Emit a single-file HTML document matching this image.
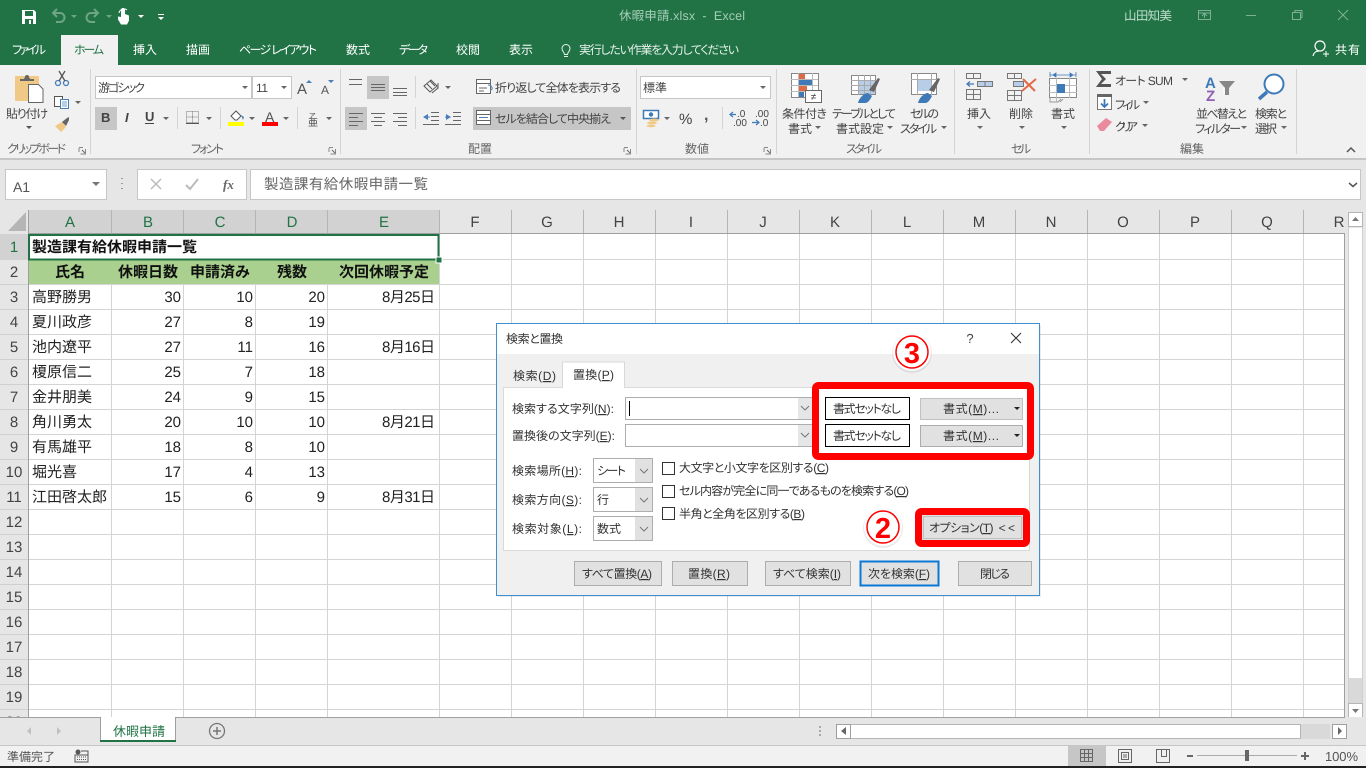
<!DOCTYPE html>
<html lang="ja"><head><meta charset="utf-8"><title>休暇申請.xlsx - Excel</title>
<style>
html,body{margin:0;padding:0;width:1366px;height:768px;overflow:hidden;background:#e6e6e6}
svg{display:block;font-family:"Liberation Sans","Noto Sans CJK JP",sans-serif;font-feature-settings:"palt";text-rendering:geometricPrecision}
.r{font-size:12px;fill:#444}
.g{font-size:12px;fill:#666}
.w{font-size:12px;fill:#fff}
.c{font-size:15px;fill:#222;font-feature-settings:normal}
.b{font-size:15px;fill:#111;font-weight:bold;font-feature-settings:normal}
.h{font-size:15px;fill:#444}
.hs{font-size:15px;fill:#217346}
.d{font-size:12px;fill:#333}
.n{text-anchor:end}
.m{text-anchor:middle}
.u{text-decoration:underline}
</style></head><body>
<svg width="1366" height="768" viewBox="0 0 1366 768" xmlns="http://www.w3.org/2000/svg">
<!-- chrome -->
<rect width="1366" height="65" fill="#217346"/>
<rect y="65" width="1366" height="93" fill="#f1f1f1"/>
<rect y="158" width="1366" height="2" fill="#c6c6c6"/>
<rect y="160" width="1366" height="50" fill="#e6e6e6"/>
<rect x="61" y="35" width="57" height="30" fill="#f1f1f1"/>
<!-- QAT -->
<path d="M22 10h12l2 2v12H22z" fill="#fff"/><rect x="25" y="11" width="8" height="5" fill="#217346"/><rect x="25" y="19" width="8" height="5" fill="#217346"/><rect x="29" y="20" width="2" height="4" fill="#fff"/>
<g fill="none" stroke="#6ea586" stroke-width="2"><path d="M53 13h7a4.500 4.500 0 0 1 0 9h-4M57 9l-4 4 4 4"/><path d="M98 13h-7a4.500 4.500 0 0 0 0 9h4M94 9l4 4-4 4"/></g>
<path d="M71 15h6l-3 3zM106 15h6l-3 3z" fill="#6ea586"/>
<path d="M121 17v-7a2 2 0 0 1 4 0v4l4 1.500v5l-2 4h-6l-3-5v-3z" fill="#fff"/><path d="M119 13a5 5 0 0 1 8-3" stroke="#fff" fill="none"/>
<path d="M138 15h6l-3 3zM158 17h6l-3 3z" fill="#fff"/><rect x="158" y="14" width="6" height="1" fill="#fff"/>
<!-- title -->
<text x="619" y="20" font-size="12.500" fill="#a6cdb6" textLength="126">休暇申請.xlsx&#160;&#160;-&#160;&#160;Excel</text>
<text x="1124" y="20" font-size="12.500" fill="#bcdcc9" textLength="48">山田知美</text>
<g fill="none" stroke="#7fb096"><rect x="1198.500" y="10.500" width="12" height="9"/><path d="M1198 13h13M1204.500 18v-4M1202 16l2.500-2.500 2.500 2.500"/><path d="M1246 15.500h10"/><rect x="1292.500" y="12.500" width="8" height="7"/><path d="M1295 12.500v-2h7v7h-1.500"/><path d="M1338 10l10 10M1348 10l-10 10"/></g>
<!-- tabs -->
<text x="12" y="54" class="w" textLength="34">ファイル</text>
<text x="74" y="54" font-size="12" fill="#217346" textLength="30">ホーム</text>
<text x="133" y="54" class="w" textLength="24">挿入</text>
<text x="186" y="54" class="w" textLength="24">描画</text>
<text x="239" y="54" class="w" textLength="78">ページ&#160;レイアウト</text>
<text x="346" y="54" class="w" textLength="24">数式</text>
<text x="399" y="54" class="w" textLength="29">データ</text>
<text x="456" y="54" class="w" textLength="24">校閲</text>
<text x="509" y="54" class="w" textLength="24">表示</text>
<path d="M564 56.500h4M564.500 54.500c0-2.500-2.500-3-2.500-6a4 4 0 0 1 8 0c0 3-2.500 3.500-2.500 6z" fill="none" stroke="#e4f0e9"/>
<text x="579" y="54" font-size="12" fill="#e4f0e9" textLength="160">実行したい作業を入力してください</text>
<circle cx="1320" cy="46" r="5" fill="none" stroke="#fff" stroke-width="1.200"/><path d="M1313 56c1-4 3-5 6-5" fill="none" stroke="#fff" stroke-width="1.200"/><path d="M1323 54h6M1326 51v6" stroke="#fff"/>
<text x="1335" y="54" class="w" textLength="25">共有</text>
<!-- ribbon separators -->
<path d="M90.500 69v85M340.500 69v85M636.500 69v85M776.500 69v85M954.500 69v85M1089.500 69v85M1296.500 69v85" stroke="#d4d4d4"/>
<path d="M177.500 107v22M220.500 107v22M297.500 107v22M415.500 76v22M415.500 107v22M722.500 107v22" stroke="#d4d4d4"/>
<!-- clipboard -->
<rect x="15" y="76" width="24" height="25" rx="1" fill="#f0c987"/><path d="M20 79h4l1-2a2 2 0 0 1 4 0l1 2h4v2H20z" fill="#666"/>
<path d="M28.500 84.500h10l4.500 4.500v13.500H28.500z" fill="#fff" stroke="#666"/>
<text x="6" y="118" class="r" textLength="42">貼り付け</text><path d="M26 126h6l-3 3z" fill="#555"/>
<g fill="none" stroke="#4a7eb8" stroke-width="1.300"><circle cx="58" cy="83" r="2.500"/><circle cx="66" cy="83" r="2.500"/></g><path d="M59 81l6-10M65 81l-6-10" stroke="#555" stroke-width="1.300"/>
<rect x="54.500" y="96.500" width="8" height="10" fill="#fff" stroke="#555"/><rect x="60.500" y="99.500" width="8" height="9" fill="#fff" stroke="#4a7eb8"/><path d="M62 102h5M62 104h5M62 106h5" stroke="#4a7eb8" stroke-width=".8"/>
<path d="M75 101h6l-3 3z" fill="#666"/>
<path d="M55 126l7-4 4 5-5 5z" fill="#f0c987"/><path d="M62 122l5-4 2-1 0 3-3 6z" fill="#666"/>
<text x="7" y="153" class="g" textLength="59">クリップボード</text>
<path d="M79 147.500h4M79 148v4M85.500 149v5h-5" fill="none" stroke="#888"/><path d="M82 150l3 3" stroke="#666"/>
<!-- font -->
<rect x="95.500" y="76.500" width="156" height="22" fill="#fff" stroke="#c6c6c6"/><rect x="252.500" y="76.500" width="39" height="22" fill="#fff" stroke="#c6c6c6"/>
<text x="98" y="92" class="r" textLength="47">游ゴシック</text><text x="256" y="92" class="r" textLength="12">11</text>
<path d="M242 86h6l-3 3zM281 86h6l-3 3z" fill="#666"/>
<text x="297" y="94" font-size="15" fill="#555">A</text><path d="M306 83l3-3 3 3z" fill="#4a7eb8"/>
<text x="321" y="94" font-size="12" fill="#555">A</text><path d="M328 80h6l-3 3z" fill="#4a7eb8"/>
<rect x="95" y="107" width="22" height="23" fill="#c6c6c6"/>
<text x="101" y="122" font-size="13" font-weight="bold" fill="#444">B</text>
<text x="125" y="122" font-size="13" font-weight="bold" font-style="italic" fill="#444">I</text>
<text x="145" y="121" font-size="13" font-weight="bold" fill="#444">U</text><rect x="145" y="123" width="9" height="1" fill="#444"/>
<path d="M163 117h6l-3 3zM206 117h6l-3 3zM249 117h6l-3 3zM283 117h6l-3 3zM326 117h6l-3 3z" fill="#666"/>
<path d="M186.500 111.500h12v11h-12zM192.500 111.500v11M186.500 117h12" fill="none" stroke="#777" stroke-dasharray="1 1"/><path d="M186 123.500h13" stroke="#555"/>
<path d="M231 116l5-5 5 5-4 4h-2z" fill="#fff" stroke="#555"/><path d="M241 115l3 2-1 3z" fill="#4a7eb8"/><rect x="228" y="122" width="16" height="4" fill="#ff0"/>
<text x="265" y="122" font-size="14" fill="#555">A</text><rect x="262" y="122" width="16" height="4" fill="#f00"/>
<text x="309" y="118" font-size="7" fill="#444">ア</text><text x="308" y="126" font-size="10" fill="#444">亜</text>
<text x="191" y="153" class="g" textLength="33">フォント</text>
<path d="M329 147.500h4M329 148v4M335.500 149v5h-5" fill="none" stroke="#888"/><path d="M332 150l3 3" stroke="#666"/>
<!-- align -->
<rect x="367" y="76" width="22" height="23" fill="#c6c6c6"/>
<path d="M349 79.500h13M349 84.500h13M371 84.500h14M371 87.500h14M371 90.500h14M393 88.500h14M393 92.500h14M393 95.500h14" stroke="#666"/>
<g fill="none" stroke="#555"><path d="M424 86l7-6 6 6-7 6z" fill="#f1f1f1"/><path d="M427 84l5 5M430 81l5 5"/><path d="M432 93l6-5M438 83v5h-1"/></g>
<path d="M445 86h6l-3 3z" fill="#666"/>
<rect x="345" y="107" width="22" height="23" fill="#c6c6c6"/>
<path d="M349 113.500h14M349 117.500h9M349 121.500h14M349 125.500h9M371 113.500h14M374 117.500h8M371 121.500h14M374 125.500h8M393 113.500h14M398 117.500h9M393 121.500h14M398 125.500h9" stroke="#666"/>
<path d="M431 112.500h8M431 116.500h8M431 120.500h8M423 124.500h16M453 112.500h8M453 116.500h8M453 120.500h8M445 124.500h16" stroke="#666"/>
<path d="M423 117l5-3v6zM451 117l-5-3v6z" fill="#4a7eb8"/><path d="M425 117h5M445 117h5" stroke="#4a7eb8"/>
<rect x="476.500" y="79.500" width="14" height="14" fill="#fff" stroke="#666"/><path d="M476 83.500h15M479 88h8M479 91h5" stroke="#666"/><path d="M490 90c4 0 2-5-2-5" stroke="#4a7eb8" fill="none"/>
<text x="495" y="92" class="r" textLength="126">折り返して全体を表示する</text>
<rect x="473" y="107" width="158" height="23" fill="#c6c6c6"/>
<rect x="476.500" y="110.500" width="14" height="14" fill="#fff" stroke="#666"/><path d="M476 114.500h15M476 120.500h15" stroke="#666"/><path d="M479 117.500h9" stroke="#4a7eb8"/>
<text x="495" y="123" class="r" textLength="116">セルを結合して中央揃え</text><path d="M620 117h6l-3 3z" fill="#555"/>
<text x="468" y="153" class="g" textLength="24">配置</text>
<path d="M624 147.500h4M624 148v4M630.500 149v5h-5" fill="none" stroke="#888"/><path d="M627 150l3 3" stroke="#666"/>
<!-- number -->
<rect x="640.500" y="76.500" width="130" height="22" fill="#fff" stroke="#c6c6c6"/>
<text x="643" y="92" class="r" textLength="24">標準</text><path d="M760 86h6l-3 3z" fill="#666"/>
<rect x="643.500" y="110.500" width="15" height="8" fill="#fff" stroke="#3f7ab8" stroke-width="1.500"/><circle cx="651" cy="114.500" r="2.200" fill="#3f7ab8"/>
<ellipse cx="654" cy="120" rx="5" ry="1.500" fill="#f0c987"/><ellipse cx="652" cy="123" rx="5" ry="1.500" fill="#f0c987"/><ellipse cx="651" cy="126" rx="4.500" ry="1.300" fill="#f0c987"/>
<path d="M664 117h6l-3 3z" fill="#666"/>
<text x="679" y="124" font-size="15" fill="#444">%</text>
<text x="704" y="120" font-size="16" font-weight="bold" fill="#555">,</text>
<text x="737" y="117" font-size="10" fill="#444">.0</text><text x="733" y="126" font-size="10" fill="#444">.00</text>
<text x="755" y="117" font-size="10" fill="#444">.00</text><text x="760" y="126" font-size="10" fill="#444">.0</text>
<path d="M730 114.500h6M733 112l-3 2.500 3 2.500M752 122.500h7M756 120l3 2.500-3 2.500" stroke="#3f7ab8" fill="none" stroke-width="1.200"/>
<text x="685" y="153" class="g" textLength="24">数値</text>
<path d="M764 147.500h4M764 148v4M770.500 149v5h-5" fill="none" stroke="#888"/><path d="M767 150l3 3" stroke="#666"/>
<!-- cond format -->
<rect x="791.500" y="73.500" width="27" height="24" fill="#fff" stroke="#888"/><path d="M791 79.500h27M791 85.500h27M791 91.500h27M798.500 73v24M812.500 73v24" stroke="#bbb"/>
<rect x="799" y="74" width="6" height="5" fill="#e06a45"/><rect x="799" y="80" width="13" height="5" fill="#3f7ab8"/><rect x="799" y="86" width="8" height="5" fill="#e06a45"/><rect x="799" y="92" width="5" height="5" fill="#3f7ab8"/>
<rect x="805.500" y="90.500" width="16" height="12" fill="#fff" stroke="#666"/><text x="813.500" y="100" font-size="10" fill="#444" class="m">≠</text>
<text x="782" y="118" class="r" textLength="45">条件付き</text><text x="788" y="133" class="r" textLength="24">書式</text><path d="M815 126h6l-3 3z" fill="#666"/>
<rect x="851.500" y="75.500" width="24" height="19" fill="#fff" stroke="#888"/><rect x="858" y="80" width="17" height="14" fill="#b7cde8"/><path d="M851 80.500h25M851 85.500h25M851 90.500h25M858.500 75v20M864.500 75v20M870.500 75v20" stroke="#aaa"/>
<path d="M869 90l9-12 2 1-6 13z" fill="#666"/><path d="M858 103c1-5 6-10 10-10l4 3c-2 4-4 7-7 7z" fill="#3f7ab8"/>
<text x="832" y="118" class="r" textLength="64">テーブルとして</text><text x="836" y="133" class="r" textLength="48">書式設定</text><path d="M887 126h6l-3 3z" fill="#666"/>
<rect x="911.500" y="73.500" width="25" height="21" fill="#fff" stroke="#888"/><path d="M911 79.500h26M917.500 73v22M931.500 73v22" stroke="#aaa"/><rect x="918" y="80" width="13" height="11" fill="#b7cde8"/>
<path d="M929 90l9-12 2 1-6 13z" fill="#666"/><path d="M918 103c1-5 6-10 10-10l4 3c-2 4-4 7-7 7z" fill="#3f7ab8"/>
<text x="910" y="118" class="r" textLength="29">セルの</text><text x="900" y="133" class="r" textLength="37">スタイル</text><path d="M941 126h6l-3 3z" fill="#666"/>
<text x="846" y="153" class="g" textLength="36">スタイル</text>
<!-- cells -->
<g fill="none" stroke="#777"><rect x="966.500" y="73.500" width="14" height="5"/><path d="M973.500 73v6"/><rect x="977.500" y="81.500" width="15" height="5" fill="#b7cde8"/><path d="M985 81v6"/><rect x="966.500" y="89.500" width="14" height="10"/><path d="M966 94.500h15M973.500 89v11"/>
<rect x="1007.500" y="73.500" width="14" height="5"/><path d="M1014.500 73v6"/><rect x="1013.500" y="81.500" width="10" height="5" fill="#b7cde8"/><rect x="1007.500" y="90.500" width="14" height="10"/><path d="M1007 95.500h15M1014.500 90v11"/></g>
<path d="M967 84h7M970 81.500l-3 2.500 3 2.500" stroke="#3f7ab8" fill="none" stroke-width="1.300"/>
<path d="M1023 79l12 12M1036 79l-14 12" stroke="#e06a45" stroke-width="2"/>
<text x="967" y="118" class="r" textLength="24">挿入</text><path d="M977 126h6l-3 3z" fill="#666"/>
<text x="1009" y="118" class="r" textLength="24">削除</text><path d="M1019 126h6l-3 3z" fill="#666"/>
<text x="1051" y="118" class="r" textLength="24">書式</text><path d="M1061 126h6l-3 3z" fill="#666"/>
<path d="M1050 75h26M1050 72v5M1076 72v5M1053 75l3-2v4zM1073 75l-3-2v4z" stroke="#3f7ab8" fill="#3f7ab8" stroke-width=".8"/>
<rect x="1049.500" y="78.500" width="27" height="19" fill="#fff" stroke="#888"/><path d="M1049 85.500h28M1049 92.500h28M1056.500 78v24M1069.500 78v20" stroke="#bbb"/><rect x="1057" y="84" width="8" height="9" fill="#3f7ab8"/><path d="M1050 98v4h8l3-3M1060 102l3-3" fill="none" stroke="#999"/>
<text x="1011" y="153" class="g" textLength="20">セル</text>
<!-- editing -->
<path d="M1096 71h15v3h-10l5 5-5 5h10v3h-15l6-8z" fill="#555"/>
<text x="1115" y="85" class="r" textLength="58">オート&#160;SUM</text><path d="M1182 78h6l-3 3z" fill="#666"/>
<rect x="1097.500" y="94.500" width="14" height="15" fill="#fff" stroke="#777"/><rect x="1097" y="94" width="15" height="3" fill="#666"/><path d="M1104.500 99v8M1101 103.500l3.500 3.500 3.500-3.500" stroke="#3f7ab8" stroke-width="1.800" fill="none"/>
<text x="1115" y="109" class="r" textLength="25">フィル</text><path d="M1143 101h6l-3 3z" fill="#666"/>
<path d="M1097 126l9-8 6 4-8 9h-4z" fill="#ea8a9d"/>
<text x="1115" y="131" class="r" textLength="23">クリア</text><path d="M1142 124h6l-3 3z" fill="#666"/>
<text x="1205" y="88" font-size="15" font-weight="bold" fill="#3f7ab8">A</text><text x="1206" y="101" font-size="15" font-weight="bold" fill="#8e5fb3">Z</text>
<path d="M1219 81h16l-6 7v7h-4v-7z" fill="#888"/><path d="M1224 87v7" stroke="#fff"/>
<text x="1196" y="118" class="r" textLength="51">並べ替えと</text><text x="1195" y="133" class="r" textLength="46">フィルター</text><path d="M1241 126h6l-3 3z" fill="#666"/>
<circle cx="1274" cy="84" r="9.500" fill="#fff" stroke="#3f7ab8" stroke-width="2"/><path d="M1267 92l-8 7" stroke="#3f7ab8" stroke-width="3.500"/>
<text x="1255" y="118" class="r" textLength="32">検索と</text><text x="1255" y="133" class="r" textLength="22">選択</text><path d="M1281 126h6l-3 3z" fill="#666"/>
<text x="1180" y="153" class="g" textLength="24">編集</text>
<path d="M1347 152l4-4 4 4" fill="none" stroke="#555" stroke-width="1.500"/>
<!-- formula bar -->
<rect x="5.500" y="169.500" width="101" height="30" fill="#fff" stroke="#c6c6c6"/>
<text x="13" y="192" font-size="14" fill="#555" textLength="17">A1</text><path d="M92 182h8l-4 4z" fill="#777"/>
<path d="M122 178v1M122 183v1M122 188v1" stroke="#999" stroke-width="2"/>
<rect x="137.500" y="169.500" width="109" height="30" fill="#fff" stroke="#c6c6c6"/>
<path d="M151 179l10 10M161 179l-10 10" stroke="#bbb" stroke-width="1.500"/><path d="M186 185l4 4 8-10" fill="none" stroke="#bbb" stroke-width="2"/>
<text x="223" y="189" font-family="Liberation Serif" font-style="italic" font-weight="bold" font-size="13" fill="#666">fx</text>
<rect x="250.500" y="169.500" width="1110" height="30" fill="#fff" stroke="#c6c6c6"/>
<text x="264" y="189" font-size="14.500" fill="#666" textLength="164" style="font-feature-settings:normal">製造課有給休暇申請一覧</text>
<path d="M1349 183l4 3.500 4-3.500" fill="none" stroke="#555" stroke-width="1.500"/>
<!-- grid -->
<rect x="28" y="234" width="1317" height="483" fill="#fff"/>
<rect x="0" y="210" width="28" height="507" fill="#e6e6e6"/>
<rect x="0" y="234" width="28" height="26" fill="#d2d2d2"/>
<rect x="29" y="210" width="410" height="24" fill="#d2d2d2"/>
<path d="M8 231l18-19v19z" fill="#b5b5b5"/>
<path d="M29 284.500H1345M29 309.500H1345M29 334.500H1345M29 359.500H1345M29 384.500H1345M29 409.500H1345M29 434.500H1345M29 459.500H1345M29 484.500H1345M29 509.500H1345M29 534.500H1345M29 559.500H1345M29 584.500H1345M29 609.500H1345M29 634.500H1345M29 659.500H1345M29 684.500H1345M29 709.500H1345M439 259.500H1345M111.500 284V717M183.500 284V717M255.500 284V717M327.500 284V717M439.500 234V717M511.500 234V717M583.500 234V717M655.500 234V717M727.500 234V717M799.500 234V717M871.500 234V717M943.500 234V717M1015.500 234V717M1087.500 234V717M1159.500 234V717M1231.500 234V717M1303.500 234V717" stroke="#d4d4d4"/>
<path d="M0 284.500h28M0 309.500h28M0 334.500h28M0 359.500h28M0 384.500h28M0 409.500h28M0 434.500h28M0 459.500h28M0 484.500h28M0 509.500h28M0 534.500h28M0 559.500h28M0 584.500h28M0 609.500h28M0 634.500h28M0 659.500h28M0 684.500h28M0 709.500h28" stroke="#d0d0d0"/>
<path d="M111.500 210v24M183.500 210v24M255.500 210v24M327.500 210v24M439.500 210v24M511.500 210v24M583.500 210v24M655.500 210v24M727.500 210v24M799.500 210v24M871.500 210v24M943.500 210v24M1015.500 210v24M1087.500 210v24M1159.500 210v24M1231.500 210v24M1303.500 210v24" stroke="#b5b5b5"/>
<path d="M28.500 210V717M28 233.500H1344.500V717" stroke="#9f9f9f" fill="none"/>
<rect x="29" y="260" width="410" height="24" fill="#a9d08e"/>
<rect x="29" y="235" width="409.500" height="24.500" fill="#fff" stroke="#217346" stroke-width="2"/>
<rect x="436" y="257" width="6" height="6" fill="#217346" stroke="#fff"/>
<!-- column letters -->
<g text-anchor="middle"><text x="70" y="227" class="hs">A</text><text x="148" y="227" class="hs">B</text><text x="220" y="227" class="hs">C</text><text x="292" y="227" class="hs">D</text><text x="384" y="227" class="hs">E</text></g>
<g text-anchor="middle"><text x="475" y="227" class="h">F</text><text x="547" y="227" class="h">G</text><text x="619" y="227" class="h">H</text><text x="691" y="227" class="h">I</text><text x="763" y="227" class="h">J</text><text x="835" y="227" class="h">K</text><text x="907" y="227" class="h">L</text><text x="979" y="227" class="h">M</text><text x="1051" y="227" class="h">N</text><text x="1123" y="227" class="h">O</text><text x="1195" y="227" class="h">P</text><text x="1267" y="227" class="h">Q</text><text x="1339" y="227" class="h">R</text></g>
<g text-anchor="middle"><text x="14" y="252" class="hs">1</text><text x="14" y="277" class="h">2</text><text x="14" y="302" class="h">3</text><text x="14" y="327" class="h">4</text><text x="14" y="352" class="h">5</text><text x="14" y="377" class="h">6</text><text x="14" y="402" class="h">7</text><text x="14" y="427" class="h">8</text><text x="14" y="452" class="h">9</text><text x="14" y="477" class="h">10</text><text x="14" y="502" class="h">11</text><text x="14" y="527" class="h">12</text><text x="14" y="552" class="h">13</text><text x="14" y="577" class="h">14</text><text x="14" y="602" class="h">15</text><text x="14" y="627" class="h">16</text><text x="14" y="652" class="h">17</text><text x="14" y="677" class="h">18</text><text x="14" y="702" class="h">19</text><text x="14" y="727" class="h">20</text></g>
<!-- cells -->
<text x="32" y="252" class="b">製造課有給休暇申請一覧</text>
<text x="70" y="277" class="b" text-anchor="middle">氏名</text><text x="148" y="277" class="b" text-anchor="middle">休暇日数</text><text x="220" y="277" class="b" text-anchor="middle">申請済み</text><text x="292" y="277" class="b" text-anchor="middle">残数</text><text x="384" y="277" class="b" text-anchor="middle">次回休暇予定</text>
<text x="32" y="302" class="c">高野勝男</text><text x="32" y="327" class="c">夏川政彦</text><text x="32" y="352" class="c">池内遼平</text><text x="32" y="377" class="c">榎原信二</text><text x="32" y="402" class="c">金井朋美</text><text x="32" y="427" class="c">角川勇太</text><text x="32" y="452" class="c">有馬雄平</text><text x="32" y="477" class="c">堀光喜</text><text x="32" y="502" class="c">江田啓太郎</text>
<text x="181" y="302" class="c n">30</text><text x="253" y="302" class="c n">10</text><text x="325" y="302" class="c n">20</text><text x="382" y="302" class="c" textLength="53">8月25日</text>
<text x="181" y="327" class="c n">27</text><text x="253" y="327" class="c n">8</text><text x="325" y="327" class="c n">19</text>
<text x="181" y="352" class="c n">27</text><text x="253" y="352" class="c n">11</text><text x="325" y="352" class="c n">16</text><text x="382" y="352" class="c" textLength="53">8月16日</text>
<text x="181" y="377" class="c n">25</text><text x="253" y="377" class="c n">7</text><text x="325" y="377" class="c n">18</text>
<text x="181" y="402" class="c n">24</text><text x="253" y="402" class="c n">9</text><text x="325" y="402" class="c n">15</text>
<text x="181" y="427" class="c n">20</text><text x="253" y="427" class="c n">10</text><text x="325" y="427" class="c n">10</text><text x="382" y="427" class="c" textLength="53">8月21日</text>
<text x="181" y="452" class="c n">18</text><text x="253" y="452" class="c n">8</text><text x="325" y="452" class="c n">10</text>
<text x="181" y="477" class="c n">17</text><text x="253" y="477" class="c n">4</text><text x="325" y="477" class="c n">13</text>
<text x="181" y="502" class="c n">15</text><text x="253" y="502" class="c n">6</text><text x="325" y="502" class="c n">9</text><text x="382" y="502" class="c" textLength="53">8月31日</text>
<!-- v scrollbar -->
<rect x="1345" y="210" width="21" height="507" fill="#e6e6e6"/>
<path d="M1344.500 233v484" stroke="#9f9f9f"/>
<rect x="1348" y="228" width="15" height="450" fill="#fff"/><rect x="1348" y="678" width="15" height="26" fill="#d9d9d9"/>
<rect x="1348.500" y="212.500" width="14" height="14" fill="#fff" stroke="#b5b5b5"/><path d="M1352 221l3.500-4 3.500 4z" fill="#777"/>
<path d="M1348.500 227v477M1362.500 227v477" stroke="#d0d0d0"/>
<rect x="1348.500" y="703.500" width="14" height="14" fill="#fff" stroke="#b5b5b5"/><path d="M1352 709l3.500 4 3.500-4z" fill="#777"/>
<!-- sheet tabs -->
<rect y="717" width="1366" height="28" fill="#e6e6e6"/>
<path d="M0 717.500H1345" stroke="#9f9f9f"/>
<path d="M100.500 718v24M175.500 718v24" stroke="#9f9f9f"/>
<rect x="101" y="717" width="74" height="24" fill="#fff"/><rect x="100" y="740" width="76" height="2" fill="#217346"/>
<text x="113" y="736" font-size="13" fill="#217346" textLength="52" style="font-feature-settings:normal">休暇申請</text>
<path d="M31 727v8l-4-4zM57 727v8l4-4z" fill="#c0c0c0"/>
<circle cx="217" cy="731" r="7.500" fill="none" stroke="#777" stroke-width="1.300"/><path d="M213 731h8M217 727v8" stroke="#777" stroke-width="1.500"/>
<path d="M820 726v2M820 730v2M820 734v2" stroke="#aaa" stroke-width="2"/>
<rect x="836.500" y="724.500" width="14" height="14" fill="#fff" stroke="#9f9f9f"/><path d="M846 727v8l-5-4z" fill="#666"/>
<rect x="851" y="724" width="449" height="15" fill="#fff"/><rect x="1300" y="724" width="30" height="15" fill="#d9d9d9"/>
<path d="M851 724.500h449M851 738.500h449M1300.500 724v15" stroke="#b5b5b5"/>
<rect x="1332.500" y="724.500" width="14" height="14" fill="#fff" stroke="#9f9f9f"/><path d="M1338 727v8l4-4z" fill="#666"/>
<!-- status -->
<rect y="745" width="1366" height="21" fill="#f1f1f1"/><path d="M0 745.500H1366" stroke="#c6c6c6"/>
<rect y="766" width="1366" height="2" fill="#222"/>
<text x="7" y="761" font-size="12" fill="#555" textLength="48">準備完了</text>
<circle cx="78" cy="752" r="2.500" fill="#555"/><path d="M75 755h13v7H75zM81 751h7v4" fill="none" stroke="#555"/><path d="M77 757h9M77 759.500h9" stroke="#555" stroke-dasharray="1 1"/>
<rect x="1068" y="746" width="38" height="20" fill="#c6c6c6"/>
<path d="M1080.500 749.500h12v12h-12zM1080 753.500h13M1080 757.500h13M1084.500 749v13M1088.500 749v13" fill="none" stroke="#666"/>
<path d="M1118.500 749.500h13v13h-13zM1121.500 752.500h7v7h-7zM1123 755h4M1123 757h4" fill="none" stroke="#666"/>
<path d="M1156.500 749.500h13v13h-13zM1161.500 749.500v7h5v-7" fill="none" stroke="#666"/>
<rect x="1187" y="755" width="6" height="2" fill="#666"/><path d="M1197 755.500h100" stroke="#aaa"/><rect x="1245" y="750" width="4" height="11" fill="#666"/><path d="M1301 756h8M1305 752v8" stroke="#666" stroke-width="2"/>
<text x="1325" y="761" font-size="13" fill="#555" textLength="33">100%</text>
<!-- dialog -->
<rect x="498" y="325" width="543" height="272" fill="#000" opacity=".08"/>
<rect x="496.500" y="323.500" width="543" height="272" fill="#f0f0f0" stroke="#3f8fd0"/>
<rect x="497" y="324" width="542" height="30" fill="#fff"/>
<text x="506" y="343" class="d" textLength="57">検索と置換</text>
<text x="970" y="343" font-size="13" fill="#444" class="m">?</text>
<path d="M1011 333l10 10M1021 333l-10 10" stroke="#333" stroke-width="1.100"/>
<rect x="503.500" y="387.500" width="526" height="163" fill="#fff" stroke="#d9d9d9"/>
<path d="M562.500 387v-25h62v25" fill="#fff" stroke="#d9d9d9"/><rect x="563" y="385" width="61" height="4" fill="#fff"/>
<text x="513" y="380" class="d" textLength="43">検索(<tspan class="u">D</tspan>)</text>
<text x="573" y="379" class="d" textLength="41">置換(<tspan class="u">P</tspan>)</text>
<text x="512" y="413" class="d" textLength="102">検索する文字列(<tspan class="u">N</tspan>):</text>
<text x="512" y="440" class="d" textLength="103">置換後の文字列(<tspan class="u">E</tspan>):</text>
<rect x="625.500" y="397.500" width="187" height="22" fill="#fff" stroke="#adadad"/><rect x="798" y="398" width="14" height="21" fill="#e6e6e6"/><path d="M801 406l4 4 4-4" fill="none" stroke="#777"/>
<rect x="625.500" y="424.500" width="187" height="22" fill="#fff" stroke="#adadad"/><rect x="798" y="425" width="14" height="21" fill="#e6e6e6"/><path d="M801 433l4 4 4-4" fill="none" stroke="#777"/>
<path d="M629.500 401v15" stroke="#000"/>
<!-- red box 3 -->
<rect x="815.500" y="385.500" width="215" height="71" fill="none" stroke="#f00" stroke-width="7" rx="3"/>
<rect x="825.500" y="397.500" width="84" height="22" fill="#fff" stroke="#000"/><rect x="825.500" y="424.500" width="84" height="22" fill="#fff" stroke="#000"/>
<text x="833" y="413" class="d" textLength="68">書式セットなし</text><text x="833" y="440" class="d" textLength="68">書式セットなし</text>
<rect x="920.500" y="398.500" width="102" height="21" fill="#e1e1e1" stroke="#c0c0c0"/><rect x="920.500" y="425.500" width="102" height="21" fill="#e1e1e1" stroke="#adadad"/>
<text x="943" y="413" class="d" textLength="56">書式(<tspan class="u">M</tspan>)...</text><text x="943" y="440" class="d" textLength="56">書式(<tspan class="u">M</tspan>)...</text>
<path d="M1014 407h6l-3 3zM1014 434h6l-3 3z" fill="#222"/>
<!-- combos -->
<text x="512" y="475" class="d" textLength="70">検索場所(<tspan class="u">H</tspan>):</text>
<text x="512" y="504" class="d" textLength="70">検索方向(<tspan class="u">S</tspan>):</text>
<text x="512" y="533" class="d" textLength="70">検索対象(<tspan class="u">L</tspan>):</text>
<rect x="593.500" y="458.500" width="59" height="24" fill="#fff" stroke="#adadad"/><rect x="635" y="459" width="17" height="23" fill="#e1e1e1"/><path d="M640 469l4 4 4-4" fill="none" stroke="#777"/>
<rect x="593.500" y="487.500" width="59" height="24" fill="#fff" stroke="#adadad"/><rect x="635" y="488" width="17" height="23" fill="#e1e1e1"/><path d="M640 498l4 4 4-4" fill="none" stroke="#777"/>
<rect x="593.500" y="516.500" width="59" height="24" fill="#fff" stroke="#adadad"/><rect x="635" y="517" width="17" height="23" fill="#e1e1e1"/><path d="M640 527l4 4 4-4" fill="none" stroke="#777"/>
<text x="597" y="475" class="d" textLength="29">シート</text><text x="597" y="504" class="d">行</text><text x="597" y="533" class="d" textLength="24">数式</text>
<rect x="662.500" y="462.500" width="12" height="12" fill="#fff" stroke="#333"/><rect x="662.500" y="485.500" width="12" height="12" fill="#fff" stroke="#333"/><rect x="662.500" y="507.500" width="12" height="12" fill="#fff" stroke="#333"/>
<text x="679" y="472" class="d" textLength="150">大文字と小文字を区別する(<tspan class="u">C</tspan>)</text>
<text x="679" y="495" class="d" textLength="230">セル内容が完全に同一であるものを検索する(<tspan class="u">O</tspan>)</text>
<text x="679" y="518" class="d" textLength="126">半角と全角を区別する(<tspan class="u">B</tspan>)</text>
<!-- red box 2 -->
<rect x="918.500" y="511.500" width="108" height="32" fill="#e1e1e1" stroke="#f00" stroke-width="7" rx="3"/>
<rect x="923.500" y="516.500" width="98" height="22" fill="#e1e1e1" stroke="#c0c0c0"/>
<text x="929" y="532" class="d" textLength="86">オプション(<tspan class="u">T</tspan>)&#160;&#160;&lt;&#160;&lt;</text>
<!-- number circles -->
<circle cx="912" cy="353" r="20" fill="#000" opacity=".08"/><circle cx="912" cy="352" r="19" fill="#fff"/><circle cx="912" cy="352" r="16" fill="#fff" stroke="#f00" stroke-width="1.500"/>
<text x="912" y="363" font-size="29" font-weight="bold" fill="#f00" text-anchor="middle">3</text>
<circle cx="883" cy="528" r="20" fill="#000" opacity=".08"/><circle cx="883" cy="527" r="19" fill="#fff"/><circle cx="883" cy="527" r="16" fill="#fff" stroke="#f00" stroke-width="1.500"/>
<text x="883" y="538" font-size="29" font-weight="bold" fill="#f00" text-anchor="middle">2</text>
<!-- dialog buttons -->
<rect x="574.500" y="561.500" width="87" height="24" fill="#e1e1e1" stroke="#adadad"/><text x="582" y="578" class="d" textLength="70">すべて置換(<tspan class="u">A</tspan>)</text>
<rect x="672.500" y="561.500" width="75" height="24" fill="#e1e1e1" stroke="#adadad"/><text x="688" y="578" class="d" textLength="42">置換(<tspan class="u">R</tspan>)</text>
<rect x="765.500" y="561.500" width="85" height="24" fill="#e1e1e1" stroke="#adadad"/><text x="773" y="578" class="d" textLength="68">すべて検索(<tspan class="u">I</tspan>)</text>
<rect x="860.500" y="561.500" width="78" height="24" fill="#e1e1e1" stroke="#0a78d7" stroke-width="2"/><text x="868" y="578" class="d" textLength="62">次を検索(<tspan class="u">F</tspan>)</text>
<rect x="958.500" y="561.500" width="73" height="24" fill="#e1e1e1" stroke="#adadad"/><text x="980" y="578" class="d" textLength="30">閉じる</text>
</svg>
</body></html>
